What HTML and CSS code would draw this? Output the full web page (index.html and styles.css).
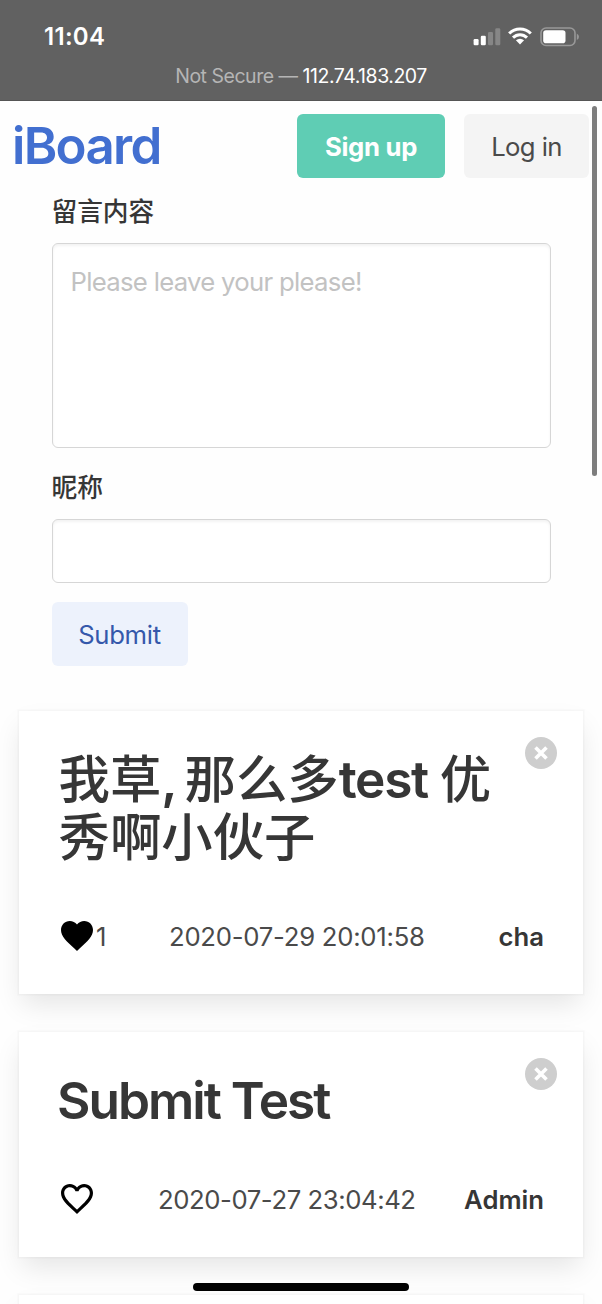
FILE: index.html
```html
<!DOCTYPE html>
<html lang="zh-CN">
<head>
<meta charset="utf-8">
<meta name="viewport" content="width=device-width">
<title>iBoard</title>
<link rel="stylesheet" href="styles.css">
</head>
<body>
<div class="screen">
  <header class="statusbar">
    <div class="status-row">
      <span class="clock">11:04</span>
      <div class="status-icons">
        <svg class="signal" width="28" height="18" viewBox="0 0 28 18"><g fill="#fff"><rect x="0.6" y="11" width="5" height="6.3" rx="1.2"/><rect x="7.8" y="7.8" width="5" height="9.5" rx="1.2"/></g><g fill="#868686"><rect x="15" y="4" width="5" height="13.3" rx="1.2"/><rect x="22.3" y="0.3" width="5" height="17" rx="1.2"/></g></svg>
        <svg class="wifi" width="24" height="18" viewBox="0 0 24 18"><g fill="none" stroke="#fff" stroke-width="3"><path d="M1.2 6.5C7.3.4 16.700.4 22.800 6.500"/><path d="M5 10.600C9 6.700 15 6.700 19 10.600"/></g><path d="M7.900 13.300Q12 10.200 16.100 13.300L12 17.600Z" fill="#fff"/></svg>
        <svg class="battery" width="40" height="20" viewBox="0 0 40 20"><rect x="1" y="1" width="34" height="17.500" rx="5" fill="none" stroke="#989898" stroke-width="1.600"/><rect x="3.200" y="3.200" width="22.300" height="13" rx="2.800" fill="#fff"/><path d="M36.800 6.400Q39 7.500 39 9.700T36.800 13Z" fill="#989898"/></svg>
      </div>
    </div>
    <div class="address"><span class="insecure">Not Secure — </span><span class="host">112.74.183.207</span></div>
  </header>

  <nav class="navbar">
    <a class="brand">iBoard</a>
    <div class="nav-buttons">
      <a class="button signup"><span>Sign up</span></a>
      <a class="button login"><span>Log in</span></a>
    </div>
  </nav>

  <form class="board-form">
    <label class="label" for="content">留言内容</label>
    <textarea id="content" class="input textarea" placeholder="Please leave your please!"></textarea>
    <label class="label label-name" for="nickname">昵称</label>
    <input id="nickname" class="input" type="text">
    <button class="button submit" type="button">Submit</button>
  </form>

  <main class="posts">
    <article class="box">
      <button class="delete" type="button" aria-label="delete"><svg width="32" height="32" viewBox="0 0 32 32"><path d="M10.500 10.500L21.500 21.500M21.500 10.500L10.500 21.500" stroke="#fff" stroke-width="3.600"/></svg></button>
      <h1 class="title">我草<span class="comma">, </span>那么多<span class="latin">test </span>优<br>秀啊小伙子</h1>
      <div class="meta">
        <svg class="heart" width="32" height="30" viewBox="2 3 20 18.350" preserveAspectRatio="none"><path d="M12 21.350l-1.450-1.320C5.400 15.360 2 12.280 2 8.500 2 5.420 4.420 3 7.500 3c1.740 0 3.410.810 4.500 2.090C13.090 3.810 14.760 3 16.500 3 19.580 3 22 5.420 22 8.500c0 3.780-3.400 6.860-8.550 11.540L12 21.350z"/></svg>
        <span class="likes">1</span>
        <time class="date">2020-07-29 20:01:58</time>
        <strong class="author">cha</strong>
      </div>
    </article>
    <article class="box">
      <button class="delete" type="button" aria-label="delete"><svg width="32" height="32" viewBox="0 0 32 32"><path d="M10.500 10.500L21.500 21.500M21.500 10.500L10.500 21.500" stroke="#fff" stroke-width="3.600"/></svg></button>
      <h1 class="title title-latin">Submit Test</h1>
      <div class="meta">
        <svg class="heart" width="32" height="30" viewBox="2 3 20 18.350" preserveAspectRatio="none"><path d="M16.500 3c-1.740 0-3.410.810-4.500 2.090C10.910 3.810 9.240 3 7.500 3 4.420 3 2 5.420 2 8.500c0 3.780 3.400 6.860 8.550 11.540L12 21.350l1.450-1.320C18.600 15.360 22 12.280 22 8.500 22 5.420 19.580 3 16.500 3zm-4.400 15.550l-.1.100-.1-.1C7.140 14.240 4 11.390 4 8.500 4 6.500 5.500 5 7.500 5c1.540 0 3.040.990 3.570 2.360h1.870C13.460 5.990 14.960 5 16.500 5c2 0 3.500 1.500 3.500 3.500 0 2.890-3.140 5.740-7.900 10.050z"/></svg>
        <time class="date date-second">2020-07-27 23:04:42</time>
        <strong class="author">Admin</strong>
      </div>
    </article>
    <article class="box"></article>
  </main>
  <div class="scrollbar"></div>
  <div class="home-indicator"></div>
</div>
</body>
</html>
```
FILE: styles.css
```css
* { box-sizing: border-box; }
body {
  margin: 0;
  background: #fefefe;
  color: #4a4a4a;
  font-family: Inter, "Noto Sans CJK SC", sans-serif;
  font-size: 25.7px;
}
.screen { position: relative; width: 602px; height: 1304px; overflow: hidden; }
.statusbar { height: 101px; background: #616161; border-bottom: 1px solid #555; }
.status-row { display: flex; justify-content: space-between; height: 62px; padding: 22px 22px 0 44px; }
.clock { color: #fff; font-size: 24px; font-weight: 600; line-height: 30px; letter-spacing: 0.3px; }
.status-icons { display: flex; align-items: flex-start; padding-top: 5px; }
.signal { margin-top: 1px; }
.wifi { margin-left: 7px; }
.battery { margin-left: 8px; }
.address { display: flex; justify-content: center; font-size: 19.5px; line-height: 28px; white-space: pre; letter-spacing: -0.48px; }
.insecure { color: #b5b5b5; }
.host { color: #fff; }
.navbar { display: flex; justify-content: space-between; align-items: center; height: 90px; padding: 0 13px 0 12px; }
.brand { color: #426fd0; font-size: 51px; font-weight: 600; line-height: 60px; letter-spacing: -1.7px; }
.nav-buttons { display: flex; gap: 19px; }
.button {
  display: flex; align-items: center; justify-content: center;
  height: 64px; padding: 0; border: 0; border-radius: 6px;
  font-family: inherit; font-size: 25.7px; letter-spacing: -0.3px;
}
.signup { width: 148px; background: #5fcdb4; color: #fff; font-weight: 700; }
.login { width: 125px; background: #f4f4f4; color: #4a4a4a; letter-spacing: -0.6px; }
.board-form { display: flex; flex-direction: column; padding: 2px 52px 0 51.5px; }
.label { height: 38px; color: #363636; font-size: 25.7px; font-weight: 500; line-height: 38px; margin-bottom: 12px; }
.label-name { margin-top: 21px; }
.input {
  width: 499px; height: 64px; padding: 18px; border: 1.5px solid #d6d6d6; border-radius: 6px; outline: 0;
  background: #fff; box-shadow: inset 0 2px 3px rgba(10, 10, 10, .05);
  font-family: inherit; font-size: 25.7px;
}
.textarea { height: 205px; resize: none; line-height: 39px; letter-spacing: -0.7px; }
.textarea::placeholder { color: #c2c2c2; opacity: 1; }
.submit { width: 136px; margin-top: 19px; background: #edf2fc; color: #3558ab; }
.posts { display: flex; flex-direction: column; gap: 38px; margin: 45px 19px 0; }
.box {
  position: relative; flex: none; min-height: 90px; padding: 40px 39px 31px 40px; background: #fff;
  box-shadow: 0 13px 26px -3px rgba(10, 10, 10, .1), 0 0 0 1.6px rgba(10, 10, 10, .025);
}
.delete { position: absolute; top: 26px; right: 26px; width: 32px; height: 32px; padding: 0; border: 0; border-radius: 50%; background: #cecece; }
.delete svg { display: block; }
.title { margin: 0 0 44px -0.5px; color: #363636; font-size: 51.4px; font-weight: 500; line-height: 57.800px; white-space: nowrap; }
.comma { font-weight: 600; letter-spacing: -2.5px; }
.latin { font-weight: 600; letter-spacing: -1.3px; }
.title-latin { margin: -1px 0 45px -2px; font-weight: 600; letter-spacing: -2px; line-height: 58px; }
.meta { display: flex; align-items: center; height: 52px; line-height: 38px; }
.heart { flex: none; margin: -2px 0 0 2px; }
.likes { width: 15px; margin-left: 3px; }
.date { margin-left: 58px; white-space: nowrap; letter-spacing: -0.25px; }
.date-second { margin-left: 65px; letter-spacing: -0.42px; }
.author { margin-left: auto; color: #363636; font-weight: 600; }
.scrollbar { position: absolute; top: 106px; left: 592px; width: 5px; height: 370px; border-radius: 3px; background: #7d7d7d; }
.home-indicator { position: absolute; left: 193px; top: 1283px; width: 216px; height: 8px; border-radius: 4px; background: #000; }
```
